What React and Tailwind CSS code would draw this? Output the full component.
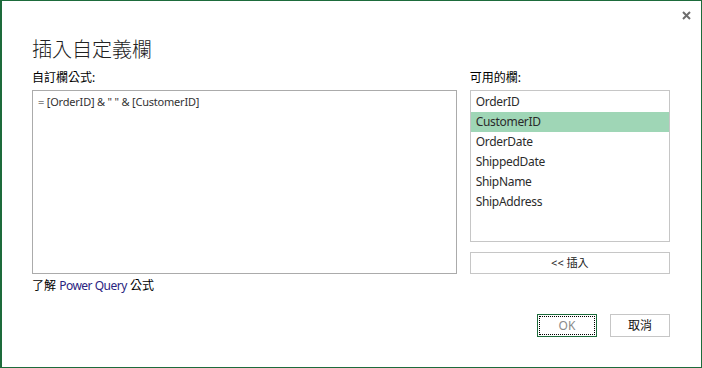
import React from "react";

const columns = ["OrderID", "CustomerID", "OrderDate", "ShippedDate", "ShipName", "ShipAddress"];

const font = { fontFamily: '"Noto Sans", "Noto Sans CJK TC", sans-serif' };

export default function App() {
  return (
    <div
      className="relative flex h-[368px] w-[702px] flex-col border border-l-2 border-[#1d6b3b] bg-white pl-[30px] pr-[31px] text-black"
      style={font}
    >
      {/* close */}
      <button className="absolute right-[10px] top-[10px] flex h-[9px] w-[9px] items-center justify-center text-[#6d6d6d]">
        <svg width="9" height="9" viewBox="0 0 9 9">
          <path d="M1 1L8 8M8 1L1 8" stroke="currentColor" strokeWidth="2" />
        </svg>
      </button>

      <h1 className="mt-[35px] h-[28px] text-[20px] font-light leading-[28px] text-[#222]">插入自定義欄</h1>

      <div className="mt-[6px] flex gap-[13px]">
        <div className="flex w-[426px] flex-col">
          <div className="h-[16px] text-[12px] leading-[16px]">自訂欄公式:</div>
          <div className="mt-[4px] h-[184px] border border-[#ababab] px-[5px] py-[3px] text-[11px] leading-[16px] tracking-[-0.2px] text-[#333]">
            <span className="text-[#8a8a8a]">=</span> [OrderID] &amp; " " &amp; [CustomerID]
          </div>
          <div className="mt-[4px] h-[16px] text-[12px] leading-[16px]">
            了解 <span className="tracking-[-0.5px] text-[#2a2480]">Power Query</span> 公式
          </div>
        </div>

        <div className="flex w-[201px] flex-col">
          <div className="h-[16px] text-[12px] leading-[16px]">可用的欄:</div>
          <div className="mt-[4px] h-[152px] border border-[#c6c6c6] pt-px">
            {columns.map((c) => (
              <div
                key={c}
                className={
                  "h-[20px] pl-[5px] text-[12px] leading-[20px] tracking-[-0.3px] text-[#2b2b2b] " +
                  (c === "CustomerID" ? "bg-[#9fd6b6]" : "")
                }
              >
                {c}
              </div>
            ))}
          </div>
          <button className="mt-[10px] flex h-[22px] items-center justify-center border border-[#c6c6c6] text-[11px] text-[#222]">
            &lt;&lt; 插入
          </button>
        </div>
      </div>

      <div className="mt-[20px] flex justify-end gap-[13px]">
        <button className="h-[23px] w-[60px] border border-[#1d6b3b] p-px">
          <div className="flex h-full w-full items-center justify-center border border-dotted border-black text-[12px] text-[#8a8a8a]">
            OK
          </div>
        </button>
        <button className="flex h-[23px] w-[60px] items-center justify-center border border-[#c6c6c6] text-[12px] text-[#111]">
          取消
        </button>
      </div>
    </div>
  );
}
